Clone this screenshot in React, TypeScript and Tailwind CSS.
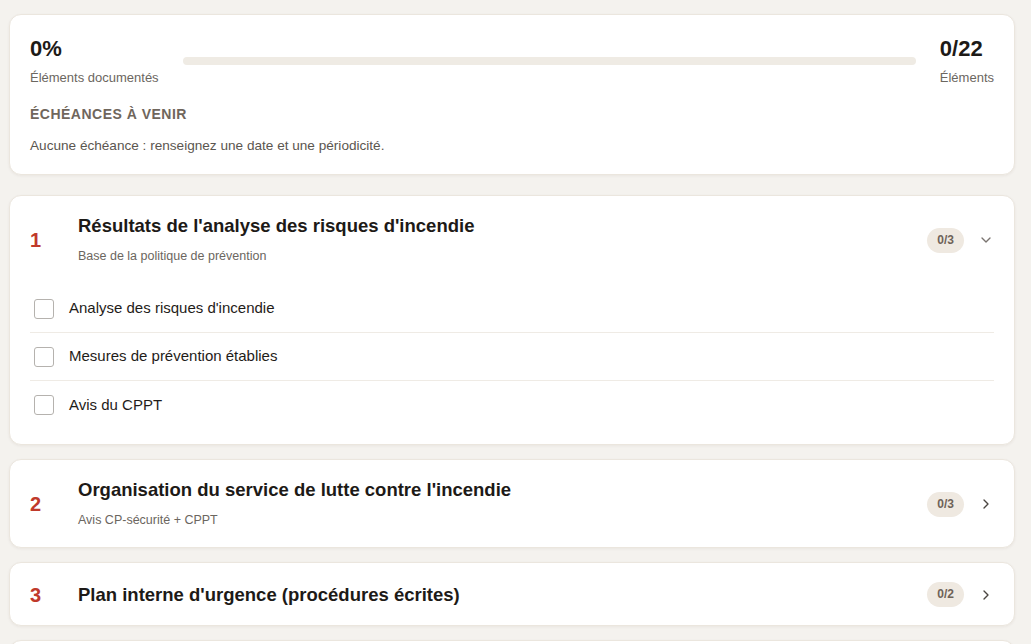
import { ChevronDown, ChevronRight } from "lucide-react";

type Section = {
  num: number;
  title: string;
  subtitle?: string;
  total: number;
  open?: boolean;
  items?: string[];
};

const sections: Section[] = [
  {
    num: 1,
    title: "Résultats de l'analyse des risques d'incendie",
    subtitle: "Base de la politique de prévention",
    total: 3,
    open: true,
    items: [
      "Analyse des risques d'incendie",
      "Mesures de prévention établies",
      "Avis du CPPT",
    ],
  },
  {
    num: 2,
    title: "Organisation du service de lutte contre l'incendie",
    subtitle: "Avis CP-sécurité + CPPT",
    total: 3,
  },
  {
    num: 3,
    title: "Plan interne d'urgence (procédures écrites)",
    total: 2,
  },
  {
    num: 4,
    title: "Exercices d'évacuation",
    total: 3,
  },
];

const card =
  "bg-white rounded-xl border border-[#ebe6de] shadow-[0_1px_3px_rgba(60,40,20,0.06)]";

function SummaryCard() {
  return (
    <div className={`${card} px-5 pt-5 pb-[19px]`}>
      <div className="flex items-center gap-6">
        <div>
          <div className="text-[22px] font-bold leading-7 text-[#1d1a17]">0%</div>
          <div className="mt-1.5 text-[13px] leading-[18px] text-[#6b6660]">Éléments documentés</div>
        </div>
        <div className="h-2 flex-1 rounded-full bg-[#efebe4]" />
        <div>
          <div className="text-[22px] font-bold leading-7 text-[#1d1a17]">0/22</div>
          <div className="mt-1.5 text-[13px] leading-[18px] text-[#6b6660]">Éléments</div>
        </div>
      </div>
      <div className="mt-[18px] text-[14px] font-bold uppercase leading-[18px] tracking-[0.035em] text-[#6f665c]">
        Échéances à venir
      </div>
      <p className="mt-[14px] text-[13.6px] leading-[18px] text-[#5b5650]">
        Aucune échéance : renseignez une date et une périodicité.
      </p>
    </div>
  );
}

function SectionCard({ s }: { s: Section }) {
  return (
    <div className={card}>
      <div className="flex items-center px-5 pt-[19px] pb-[18px]">
        <div className="w-12 shrink-0 text-xl font-bold leading-6 text-[#c0392b]">{s.num}</div>
        <div className="flex-1">
          <div className="text-[18.5px] font-bold leading-[22px] text-[#1d1a17]">{s.title}</div>
          {s.subtitle && (
            <div className="mt-[10px] text-[12.5px] leading-[18px] text-[#6b6660]">{s.subtitle}</div>
          )}
        </div>
        <div className="flex items-center gap-3.5">
          <span className="rounded-full bg-[#efe9e1] px-2.5 py-[5px] text-xs font-bold leading-[15px] text-[#6e6258]">
            0/{s.total}
          </span>
          {s.open ? (
            <ChevronDown className="h-4 w-4 text-[#7a7470]" strokeWidth={2} />
          ) : (
            <ChevronRight className="h-4 w-4 text-[#4a4540]" strokeWidth={2} />
          )}
        </div>
      </div>
      {s.open && s.items && (
        <div className="px-5 pt-[2px] pb-[15px]">
          {s.items.map((it, i) => (
            <div
              key={it}
              className={`flex h-12 items-center gap-[15px] px-1 ${
                i < s.items!.length - 1 ? "border-b border-[#efebe5]" : ""
              }`}
            >
              <span className="h-5 w-5 shrink-0 rounded-[3px] border-[1.5px] border-[#b5b2ae] bg-white" />
              <span className="text-[15px] text-[#1f1c19]">{it}</span>
            </div>
          ))}
        </div>
      )}
    </div>
  );
}

export default function App() {
  return (
    <div
      className="min-h-screen bg-[#f4f2ee] pl-[9px] pr-[16px] pt-[14px] pb-6"
      style={{ fontFamily: '"Liberation Sans", Arial, sans-serif' }}
    >
      <SummaryCard />
      <div className="mt-5 flex flex-col gap-[14px]">
        {sections.map((s) => (
          <SectionCard key={s.num} s={s} />
        ))}
      </div>
    </div>
  );
}
